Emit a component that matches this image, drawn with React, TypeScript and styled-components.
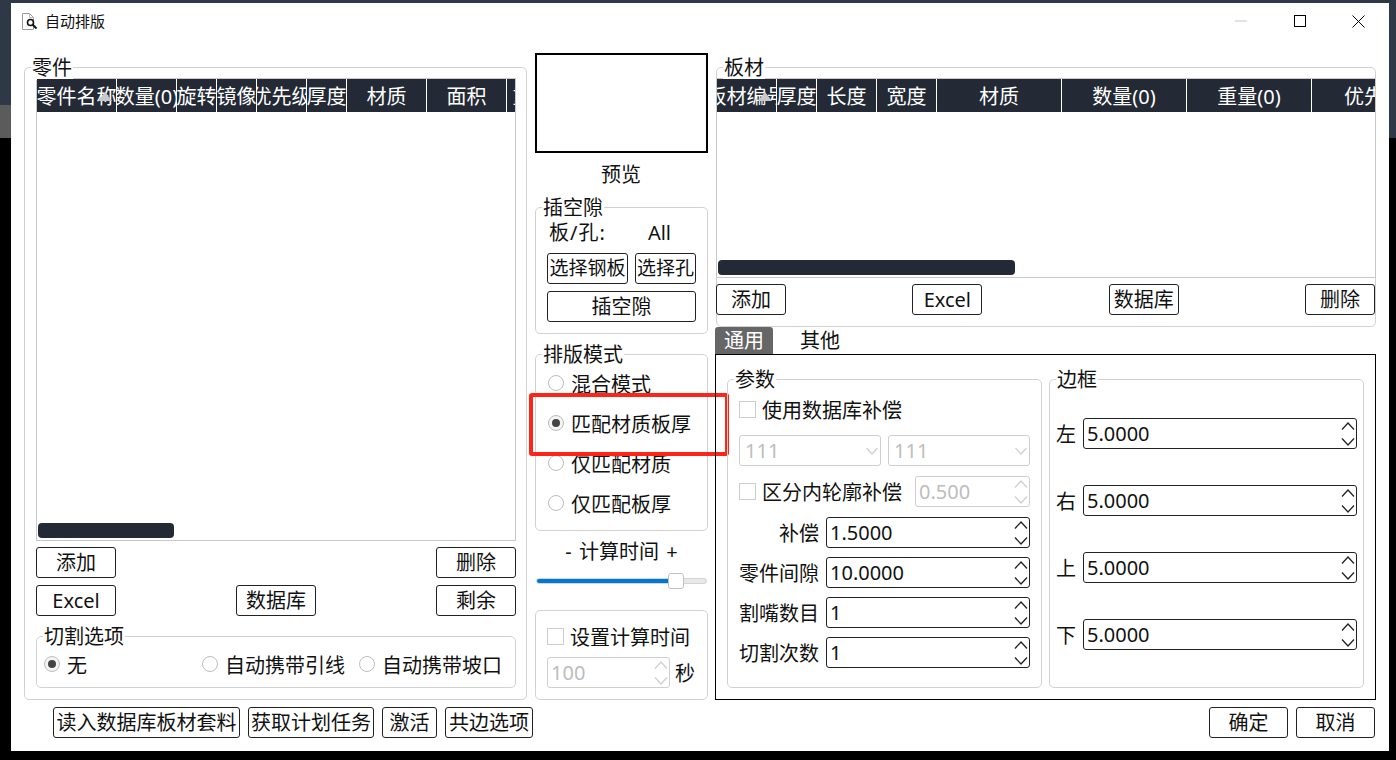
import React from 'react';
import styled, { createGlobalStyle, css } from 'styled-components';

const GlobalStyle = createGlobalStyle`
  * {
    box-sizing: border-box;
  }

  html,
  body {
    margin: 0;
    height: 760px;
    overflow: hidden;
  }

  body {
    font-family: 'Noto Sans', 'Noto Sans CJK SC', sans-serif;
    font-size: 20px;
    color: #111;
    background:
      linear-gradient(#2f3846, #2f3846) top / 100% 3px no-repeat,
      linear-gradient(#2f3846 0 105px, #5b5b5b 105px 138px, #000 138px) left / 11px 100% no-repeat,
      linear-gradient(#2f3846 0 138px, #000 138px) right / 7px 100% no-repeat,
      #000;
  }
`;

const Window = styled.div`
  margin: 3px 7px 0 11px;
  height: 748px;
  background: #fff;
  display: flex;
  flex-direction: column;
`;

const TitleBar = styled.div`
  height: 50px;
  display: flex;
  align-items: flex-start;
  padding-left: 10px;
`;

const TitleIcon = styled.svg`
  width: 17px;
  height: 18px;
  margin-top: 10px;
  flex: none;
`;

const TitleText = styled.span`
  margin-left: 7px;
  height: 36px;
  line-height: 36px;
  font-size: 15px;
`;

const WinControls = styled.div`
  margin-left: auto;
  display: flex;
  margin-right: 1px;
`;

const WinButton = styled.div`
  width: 59px;
  height: 36px;
  display: flex;
  align-items: center;
  justify-content: center;
`;

const Content = styled.div`
  display: grid;
  grid-template-columns: 503px 173px 660px;
  column-gap: 8px;
  padding: 0 13px;
  height: 647px;
`;

const Column = styled.div`
  display: flex;
  flex-direction: column;
`;

const Group = styled.div<{ $h: number; $mt?: number }>`
  position: relative;
  height: ${({ $h }) => $h}px;
  margin-top: ${({ $mt }) => $mt ?? 0}px;
  border: 1px solid #d2d2d2;
  border-radius: 5px;
  background: #fff;
  flex: none;
`;

const PaneGroup = styled(Group)`
  width: 315px;
  background: transparent;
`;

const Legend = styled.span`
  position: absolute;
  top: -12px;
  left: 6px;
  padding: 0 1px;
  line-height: 24px;
  background: #fff;
  white-space: nowrap;
`;

const PartsBody = styled.div`
  padding: 10px 10px 0 11px;
`;

const SheetBody = styled.div`
  margin: 0 -1px;
  padding-top: 10px;
`;

const TableFrame = styled.div<{ $h: number }>`
  height: ${({ $h }) => $h}px;
  border: 1px solid #c8c8c8;
  display: flex;
  flex-direction: column;
  overflow: hidden;
`;

const HeaderRow = styled.div`
  position: relative;
  height: 33px;
  flex: none;
  display: flex;
  background: #232a35;
  overflow: hidden;
`;

const HeaderCell = styled.div<{ $w: number }>`
  flex: 0 0 ${({ $w }) => $w}px;
  height: 33px;
  line-height: 35px;
  border-right: 1px solid #fff;
  color: #fff;
  display: flex;
  justify-content: center;
  white-space: nowrap;
  overflow: hidden;
`;

const SortMark = styled.svg<{ $x: number }>`
  position: absolute;
  top: 13px;
  left: ${({ $x }) => $x}px;
  width: 14px;
  height: 9px;
`;

const TableBody = styled.div`
  flex: 1;
`;

const ScrollTrack = styled.div`
  height: 19px;
  flex: none;
  padding: 2px 1px;
`;

const ScrollThumb = styled.div<{ $w: number }>`
  width: ${({ $w }) => $w}px;
  height: 15px;
  border-radius: 4px;
  background: #232a35;
`;

const Button = styled.button<{ $w?: number; $tight?: boolean }>`
  width: ${({ $w }) => ($w ? `${$w}px` : '100%')};
  height: 31px;
  padding: 0;
  flex: none;
  background: #fff;
  border: 1px solid #222;
  border-radius: 3px;
  color: #111;
  font-family: inherit;
  font-size: ${({ $tight }) => ($tight ? 19 : 20)}px;
  line-height: 27px;
  white-space: nowrap;
  overflow: hidden;
`;

const ButtonRow = styled.div<{ $mt: number }>`
  display: flex;
  justify-content: space-between;
  margin-top: ${({ $mt }) => $mt}px;
`;

const RadioItem = styled.label<{ $h?: number }>`
  display: flex;
  align-items: center;
  gap: 7px;
  height: ${({ $h }) => $h ?? 28}px;
  white-space: nowrap;
`;

const RadioDot = styled.span<{ $on?: boolean }>`
  width: 16px;
  height: 16px;
  flex: none;
  border-radius: 50%;
  border: 1px solid #bdbdbd;
  display: flex;
  align-items: center;
  justify-content: center;
  background: ${({ $on }) => ($on ? '#f4f4f4' : '#fff')};

  &::after {
    content: '';
    width: 8px;
    height: 8px;
    border-radius: 50%;
    background: ${({ $on }) => ($on ? '#444' : 'transparent')};
  }
`;

const Radio: React.FC<{ on?: boolean; h?: number; children: React.ReactNode }> = ({ on, h, children }) => (
  <RadioItem $h={h}>
    <RadioDot $on={on} />
    <span>{children}</span>
  </RadioItem>
);

const CutRow = styled.div`
  display: flex;
  justify-content: space-between;
  align-items: center;
  height: 28px;
  margin-top: 13px;
  padding: 0 13px 0 7px;
`;

const CutRight = styled.div`
  display: flex;
  gap: 14px;
`;

const Preview = styled.div`
  height: 100px;
  flex: none;
  border: 2px solid #000;
`;

const PreviewCaption = styled.div`
  height: 42px;
  line-height: 44px;
  padding-right: 1px;
  text-align: center;
  flex: none;
`;

const GapInfo = styled.div`
  display: flex;
  justify-content: space-between;
  height: 24px;
  line-height: 24px;
  margin: 13px 36px 0 13px;
`;

const GapLabel = styled.span`
  letter-spacing: 1px;
`;

const GapBody = styled.div`
  padding: 0 11px;
`;

const ModeBody = styled.div`
  padding: 8px 0 0 12px;
`;

const AlertBox = styled.div`
  position: absolute;
  top: 38px;
  left: -7px;
  width: 200px;
  height: 63px;
  border: 4px solid #ff2418;
  border-radius: 3px;
  pointer-events: none;
`;

const TimeLabel = styled.div`
  margin-top: 9px;
  height: 24px;
  line-height: 24px;
  text-align: center;
  word-spacing: 2px;
  white-space: pre;
  flex: none;
`;

const Slider = styled.div`
  position: relative;
  height: 6px;
  margin: 14px 1px 0;
  border: 1px solid #d4d4d4;
  border-radius: 3px;
  background: #e8e8e8;
  flex: none;
`;

const SliderFill = styled.div`
  height: 100%;
  background: #0078d4;
  border-radius: 3px 0 0 3px;
`;

const SliderHandle = styled.div`
  position: absolute;
  top: -6px;
  height: 16px;
  width: 16px;
  background: #fff;
  border: 1px solid #c2c2c2;
  border-radius: 3px;
`;

const CheckItem = styled.label`
  display: flex;
  align-items: center;
  gap: 6px;
  height: 28px;
  white-space: nowrap;
`;

const CheckSquare = styled.span`
  width: 17px;
  height: 17px;
  flex: none;
  border: 1px solid #cdcdcd;
  background: #fff;
`;

const TimeBody = styled.div`
  padding: 11px 12px 0 11px;
`;

const TimeRow = styled.div<{ $mt?: number }>`
  display: flex;
  align-items: center;
  justify-content: space-between;
  height: 31px;
  margin-top: ${({ $mt }) => $mt ?? 0}px;
`;

const fieldBase = css<{ $w?: number; $disabled?: boolean }>`
  height: 31px;
  width: ${({ $w }) => ($w ? `${$w}px` : 'auto')};
  flex: ${({ $w }) => ($w ? 'none' : '1')};
  display: flex;
  align-items: center;
  justify-content: space-between;
  padding: 0 1px 0 3px;
  border-radius: 3px;
  border: 1px solid ${({ $disabled }) => ($disabled ? '#cfcfcf' : '#222')};
  color: ${({ $disabled }) => ($disabled ? '#bdbdbd' : '#111')};
  background: #fff;
`;

const SpinBox = styled.div<{ $w?: number; $disabled?: boolean }>`
  ${fieldBase}
`;

const SpinArrows = styled.div`
  display: flex;
  flex-direction: column;
  gap: 6px;
`;

const Arrow = styled.svg`
  display: block;
  width: 14px;
  height: 10px;
`;

const Spin: React.FC<{ value: string; w?: number; disabled?: boolean }> = ({ value, w, disabled }) => {
  const stroke = disabled ? '#cfcfcf' : '#222';
  return (
    <SpinBox $w={w} $disabled={disabled}>
      <span>{value}</span>
      <SpinArrows>
        <Arrow viewBox="0 0 14 10">
          <path d="M1 8.500 7 2l6 6.500" fill="none" stroke={stroke} strokeWidth="1.300" />
        </Arrow>
        <Arrow viewBox="0 0 14 10">
          <path d="M1 1.500 7 8l6-6.500" fill="none" stroke={stroke} strokeWidth="1.300" />
        </Arrow>
      </SpinArrows>
    </SpinBox>
  );
};

const ComboBox = styled.div<{ $w?: number; $disabled?: boolean }>`
  ${fieldBase}
  padding-left: 5px;
`;

const Combo: React.FC<{ value: string; w: number }> = ({ value, w }) => (
  <ComboBox $w={w} $disabled>
    <span>{value}</span>
    <Arrow viewBox="0 0 14 10">
      <path d="M1.500 2 7 8l5.500-6" fill="none" stroke="#cfcfcf" strokeWidth="1.200" />
    </Arrow>
  </ComboBox>
);

const SheetButtons = styled.div`
  display: flex;
  justify-content: space-between;
  margin-top: 6px;
  padding-right: 1px;
`;

const TabBar = styled.div`
  display: flex;
  height: 27px;
  margin: 0 0 0 -1px;
  flex: none;
`;

const Tab = styled.div<{ $active?: boolean }>`
  width: ${({ $active }) => ($active ? 58 : 94)}px;
  height: 27px;
  line-height: 27px;
  text-align: center;
  color: ${({ $active }) => ($active ? '#fff' : '#111')};
  background: ${({ $active }) => ($active ? '#666' : 'transparent')};
  border-radius: 3px 3px 0 0;
`;

const TabPane = styled.div`
  position: relative;
  z-index: 1;
  height: 346px;
  margin-left: -1px;
  padding: 24px 0 0 11px;
  border: 1px solid #000;
  display: flex;
  gap: 7px;
`;

const ParamBody = styled.div`
  padding: 14px 11px 0;
`;

const ParamRow = styled.div<{ $mt?: number; $between?: boolean }>`
  display: flex;
  align-items: center;
  justify-content: ${({ $between }) => ($between ? 'space-between' : 'flex-start')};
  gap: 7px;
  height: 31px;
  margin-top: ${({ $mt }) => $mt ?? 0}px;
`;

const FieldLabel = styled.span<{ $w: number }>`
  width: ${({ $w }) => $w}px;
  flex: none;
  text-align: right;
  white-space: nowrap;
`;

const BorderBody = styled.div`
  padding: 38px 6px 0;
  display: flex;
  flex-direction: column;
  gap: 36px;
`;

const Footer = styled.div`
  display: flex;
  gap: 8px;
  margin-top: 7px;
  padding: 0 14px 0 42px;
`;

const FooterSpacer = styled.div`
  flex: 1;
`;

const partColumns = [
  { label: '零件名称', w: 80 },
  { label: '数量(0)', w: 60 },
  { label: '旋转', w: 40 },
  { label: '镜像', w: 40 },
  { label: '优先级', w: 50 },
  { label: '厚度', w: 40 },
  { label: '材质', w: 80 },
  { label: '面积', w: 80 },
  { label: '重量', w: 52 },
];

const sheetColumns = [
  { label: '板材编号', w: 60 },
  { label: '厚度', w: 40 },
  { label: '长度', w: 60 },
  { label: '宽度', w: 60 },
  { label: '材质', w: 125 },
  { label: '数量(0)', w: 125 },
  { label: '重量(0)', w: 125 },
  { label: '优先级', w: 125 },
];

const Header: React.FC<{ columns: { label: string; w: number }[]; markX: number }> = ({ columns, markX }) => (
  <HeaderRow>
    {columns.map((c) => (
      <HeaderCell key={c.label} $w={c.w}>
        {c.label}
      </HeaderCell>
    ))}
    <SortMark $x={markX} viewBox="0 0 14 9">
      <path d="M7 0l7 9H0z" fill="#c9c9c9" />
    </SortMark>
  </HeaderRow>
);

export default function App() {
  return (
    <>
      <GlobalStyle />
      <Window>
        <TitleBar>
          <TitleIcon viewBox="0 0 17 18">
            <path d="M1.500.500h7l4 4V16.500h-11z" fill="#fff" stroke="#9a9a9a" />
            <path d="M8.500.500v4h4" fill="none" stroke="#bcbcbc" />
            <circle cx="9.500" cy="9.500" r="3" fill="#fff" stroke="#111" strokeWidth="1.600" />
            <path d="M11.500 11.500l4 4" stroke="#111" strokeWidth="2" />
          </TitleIcon>
          <TitleText>自动排版</TitleText>
          <WinControls>
            <WinButton>
              <svg width="12" height="2" viewBox="0 0 12 2">
                <path d="M0 1h12" stroke="#c4c4c4" />
              </svg>
            </WinButton>
            <WinButton>
              <svg width="12" height="12" viewBox="0 0 12 12">
                <rect x=".5" y=".5" width="11" height="11" fill="none" stroke="#000" />
              </svg>
            </WinButton>
            <WinButton>
              <svg width="13" height="13" viewBox="0 0 13 13">
                <path d="M.5.500l12 12M12.500.500l-12 12" fill="none" stroke="#000" />
              </svg>
            </WinButton>
          </WinControls>
        </TitleBar>

        <Content>
          <Column>
            <Group $h={633} $mt={14}>
              <Legend>零件</Legend>
              <PartsBody>
                <TableFrame $h={463}>
                  <Header columns={partColumns} markX={61} />
                  <TableBody />
                  <ScrollTrack>
                    <ScrollThumb $w={136} />
                  </ScrollTrack>
                </TableFrame>
                <ButtonRow $mt={6}>
                  <Button $w={80}>添加</Button>
                  <Button $w={80}>删除</Button>
                </ButtonRow>
                <ButtonRow $mt={7}>
                  <Button $w={80}>Excel</Button>
                  <Button $w={80}>数据库</Button>
                  <Button $w={80}>剩余</Button>
                </ButtonRow>
                <Group $h={52} $mt={20}>
                  <Legend>切割选项</Legend>
                  <CutRow>
                    <Radio on>无</Radio>
                    <CutRight>
                      <Radio>自动携带引线</Radio>
                      <Radio>自动携带坡口</Radio>
                    </CutRight>
                  </CutRow>
                </Group>
              </PartsBody>
            </Group>
          </Column>

          <Column>
            <Preview />
            <PreviewCaption>预览</PreviewCaption>
            <Group $h={127} $mt={12}>
              <Legend>插空隙</Legend>
              <GapInfo>
                <GapLabel>板/孔:</GapLabel>
                <span>All</span>
              </GapInfo>
              <GapBody>
                <ButtonRow $mt={8}>
                  <Button $w={81} $tight>选择钢板</Button>
                  <Button $w={61} $tight>选择孔</Button>
                </ButtonRow>
                <ButtonRow $mt={7}>
                  <Button>插空隙</Button>
                </ButtonRow>
              </GapBody>
            </Group>
            <Group $h={177} $mt={20}>
              <Legend>排版模式</Legend>
              <ModeBody>
                <Radio h={40}>混合模式</Radio>
                <Radio h={40} on>匹配材质板厚</Radio>
                <Radio h={40}>仅匹配材质</Radio>
                <Radio h={40}>仅匹配板厚</Radio>
              </ModeBody>
              <AlertBox />
            </Group>
            <TimeLabel>- 计算时间 +</TimeLabel>
            <Slider>
              <SliderFill style={{ width: `${(131 / 169) * 100}%` }} />
              <SliderHandle style={{ left: 131 }} />
            </Slider>
            <Group $h={90} $mt={26}>
              <TimeBody>
                <CheckItem>
                  <CheckSquare />
                  设置计算时间
                </CheckItem>
                <TimeRow $mt={7}>
                  <Spin value="100" w={123} disabled />
                  <span>秒</span>
                </TimeRow>
              </TimeBody>
            </Group>
          </Column>

          <Column>
            <Group $h={260} $mt={14}>
              <Legend>板材</Legend>
              <SheetBody>
                <TableFrame $h={200}>
                  <Header columns={sheetColumns} markX={41} />
                  <TableBody />
                  <ScrollTrack>
                    <ScrollThumb $w={297} />
                  </ScrollTrack>
                </TableFrame>
                <SheetButtons>
                  <Button $w={70}>添加</Button>
                  <Button $w={70}>Excel</Button>
                  <Button $w={70}>数据库</Button>
                  <Button $w={70}>删除</Button>
                </SheetButtons>
              </SheetBody>
            </Group>
            <TabBar>
              <Tab $active>通用</Tab>
              <Tab>其他</Tab>
            </TabBar>
            <TabPane>
              <PaneGroup $h={309}>
                <Legend>参数</Legend>
                <ParamBody>
                  <ParamRow>
                    <CheckItem>
                      <CheckSquare />
                      使用数据库补偿
                    </CheckItem>
                  </ParamRow>
                  <ParamRow $mt={10}>
                    <Combo value="111" w={142} />
                    <Combo value="111" w={142} />
                  </ParamRow>
                  <ParamRow $mt={10} $between>
                    <CheckItem>
                      <CheckSquare />
                      区分内轮廓补偿
                    </CheckItem>
                    <Spin value="0.500" w={115} disabled />
                  </ParamRow>
                  <ParamRow $mt={10}>
                    <FieldLabel $w={80}>补偿</FieldLabel>
                    <Spin value="1.5000" />
                  </ParamRow>
                  <ParamRow $mt={9}>
                    <FieldLabel $w={80}>零件间隙</FieldLabel>
                    <Spin value="10.0000" />
                  </ParamRow>
                  <ParamRow $mt={9}>
                    <FieldLabel $w={80}>割嘴数目</FieldLabel>
                    <Spin value="1" />
                  </ParamRow>
                  <ParamRow $mt={9}>
                    <FieldLabel $w={80}>切割次数</FieldLabel>
                    <Spin value="1" />
                  </ParamRow>
                </ParamBody>
              </PaneGroup>
              <PaneGroup $h={309}>
                <Legend>边框</Legend>
                <BorderBody>
                  {['左', '右', '上', '下'].map((side) => (
                    <ParamRow key={side}>
                      <FieldLabel $w={20}>{side}</FieldLabel>
                      <Spin value="5.0000" />
                    </ParamRow>
                  ))}
                </BorderBody>
              </PaneGroup>
            </TabPane>
          </Column>
        </Content>

        <Footer>
          <Button $w={187}>读入数据库板材套料</Button>
          <Button $w={126}>获取计划任务</Button>
          <Button $w={55}>激活</Button>
          <Button $w={88}>共边选项</Button>
          <FooterSpacer />
          <Button $w={79}>确定</Button>
          <Button $w={79}>取消</Button>
        </Footer>
      </Window>
    </>
  );
}
